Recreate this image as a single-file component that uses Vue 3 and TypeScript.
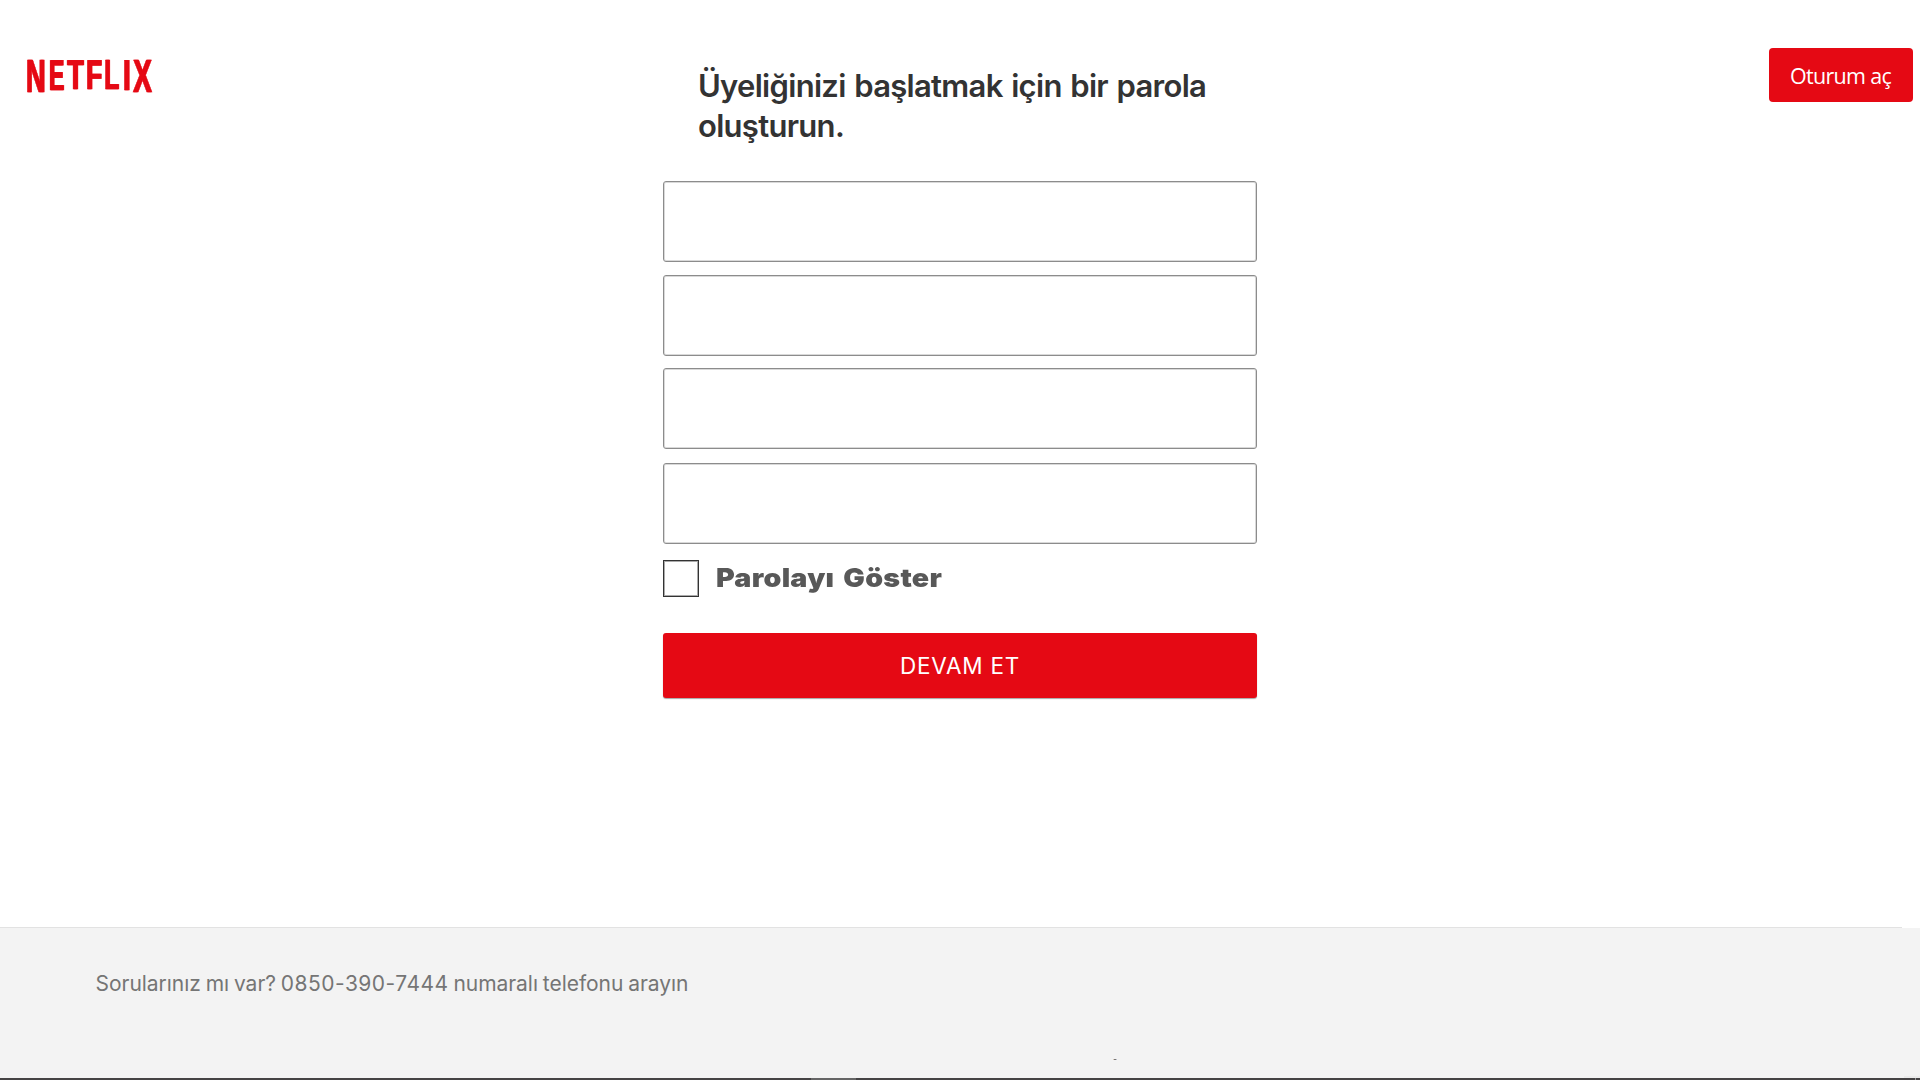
<script setup lang="ts">
import { ref } from 'vue'

interface LogoLetter {
  char: string
  left: number
  right: number
  height: number
  inkLeft: number
  inkRight: number
}

// Letter extents in pixels, ink extents in font units (2048 per em)
const letters: LogoLetter[] = [
  { char: 'N', left: 0, right: 17.4, height: 32.6, inkLeft: 137, inkRight: 1342 },
  { char: 'E', left: 22.8, right: 37, height: 30.3, inkLeft: 137, inkRight: 1274 },
  { char: 'T', left: 40.2, right: 57, height: 29.2, inkLeft: 42, inkRight: 1208 },
  { char: 'F', left: 60.2, right: 75, height: 29, inkLeft: 137, inkRight: 1168 },
  { char: 'L', left: 78.2, right: 92.2, height: 29.5, inkLeft: 137, inkRight: 1188 },
  { char: 'I', left: 97.2, right: 102.6, height: 30.2, inkLeft: 137, inkRight: 432 },
  { char: 'X', left: 105.9, right: 125, height: 32.6, inkLeft: 30, inkRight: 1335 },
]

// The drop shadow widens every stem by one pixel
const thicken = 1

const letterTransform = (l: LogoLetter): string => {
  const sx = ((l.right - l.left - thicken - 0.4) * 2048) / ((l.inkRight - l.inkLeft) * 100)
  const sy = (l.height - 0.6) / 68.8
  const x = l.left + 0.2 - (l.inkLeft / 2048) * 100 * sx
  return `translate(${x} ${l.height - 0.3}) scale(${sx} ${sy})`
}

const fields = ref<string[]>(['', '', '', ''])
const showPassword = ref(false)
</script>

<template>
  <div class="page">
    <header class="side">
      <svg class="logo" viewBox="0 0 126 34" aria-label="NETFLIX">
        <text v-for="l in letters" :key="l.char" :transform="letterTransform(l)">{{ l.char }}</text>
      </svg>
    </header>

    <main class="signup">
      <h1>Üyeliğinizi başlatmak için bir parola<br />oluşturun.</h1>
      <form @submit.prevent>
        <input v-for="(_, i) in fields" :key="i" v-model="fields[i]" class="field" :class="`field-${i}`" type="text" />
        <label class="show">
          <input v-model="showPassword" type="checkbox" />
          <span>Parolayı Göster</span>
        </label>
        <button class="continue" type="submit">DEVAM ET</button>
      </form>
    </main>

    <div class="side right">
      <button class="login" type="button">Oturum aç</button>
    </div>

    <footer>
      <div class="rule"></div>
      <p>Sorularınız mı var? <span class="phone">0850-390-7444</span> numaralı telefonu arayın</p>
      <i class="speck"></i>
      <div class="corner"></div>
      <div class="strip"><i class="thumb"></i><i class="tick"></i></div>
    </footer>
  </div>
</template>

<style>
body {
  margin: 0;
  background: #fff;
  overflow: hidden;
}
</style>

<style scoped>
.page {
  display: grid;
  grid-template-columns: 663px 594px 663px;
  grid-template-rows: 927px 153px;
  width: 1920px;
  height: 1080px;
  overflow: hidden;
  font-family: Inter, "Liberation Sans", sans-serif;
}

.logo {
  display: block;
  width: 126px;
  height: 34px;
  margin: 60px 0 0 27px;
  overflow: visible;
  filter: drop-shadow(1px 0 0 #e50914);
}

.logo text {
  font: bold 100px "Liberation Sans", Arial, sans-serif;
  fill: #e50914;
  stroke: #e50914;
  stroke-width: 1.4px;
  text-rendering: geometricPrecision;
}

h1 {
  height: 80px;
  margin: 66px 0 0 35px;
  color: #333;
  font-size: 31px;
  font-weight: 600;
  line-height: 40px;
  letter-spacing: -0.7px;
  word-spacing: 1.5px;
  white-space: nowrap;
}

form {
  display: flex;
  flex-direction: column;
  margin-top: 35px;
}

.field {
  box-sizing: border-box;
  width: 594px;
  height: 81px;
  margin: 0 0 13px;
  padding: 0 12px;
  border: 1px solid #8c8c8c;
  border-radius: 3px;
  background: #fff;
  box-shadow: inset 0 0 0 1px #d9d9d9;
  font: 22px Inter, sans-serif;
  outline: none;
}

.field-1 {
  margin-bottom: 12px;
}

.field-2 {
  margin-bottom: 14px;
}

.field-3 {
  margin-bottom: 16px;
}

.show {
  display: flex;
  align-items: center;
  height: 37px;
  color: #585858;
  font-size: 26px;
  font-weight: 900;
  white-space: nowrap;
}

.show span {
  padding-bottom: 2px;
  letter-spacing: 0.25px;
  word-spacing: 2.7px;
  transform: scaleX(1.1);
  transform-origin: 0 50%;
}

.show input {
  appearance: none;
  box-sizing: border-box;
  width: 36px;
  height: 37px;
  margin: 0 17px 0 0;
  border: 1px solid #333;
  background: #fff;
  box-shadow: inset 0 0 0 1px #aaa;
}

button {
  border: 0;
  padding: 0;
  color: #fff;
  background: #e50914;
  white-space: nowrap;
}

.continue {
  height: 65px;
  margin-top: 36px;
  border-radius: 3px;
  box-shadow: 0 1px 1px rgba(0, 0, 0, 0.35);
  font: 22.5px Inter, sans-serif;
  letter-spacing: 0.75px;
}

.login {
  display: block;
  width: 144px;
  height: 54px;
  margin: 48px 0 0 512px;
  padding: 1px 1px 0 0;
  border-radius: 4px;
  font: 21.5px "Open Sans", sans-serif;
  letter-spacing: -0.7px;
}

footer {
  position: relative;
  grid-column: 1 / -1;
  display: flex;
  flex-direction: column;
  background: linear-gradient(#fff 1px, #f3f3f3 1px);
}

.rule {
  width: 1902px;
  height: 1px;
  background: #e2e2e2;
}

p {
  margin: 41px 0 0 95.6px;
  color: #757575;
  font-size: 21px;
  line-height: 30px;
  letter-spacing: -0.04px;
  word-spacing: -1px;
  white-space: nowrap;
}

.phone {
  letter-spacing: 0.48px;
}

.speck {
  position: absolute;
  left: 1113px;
  top: 132px;
  width: 4px;
  height: 1px;
  background: linear-gradient(90deg, #d9c8b8 1px, #777 1px 3px, #b9bcc8 3px);
}

.corner {
  align-self: flex-end;
  width: 16px;
  height: 2px;
  margin-top: auto;
  background: #ebebeb;
}

.strip {
  display: flex;
  height: 2px;
  background: #454344;
}

.thumb {
  width: 45px;
  margin-left: 811px;
  background: #656565;
}

.tick {
  width: 1px;
  margin-left: 1059px;
  background: #999;
}
</style>
